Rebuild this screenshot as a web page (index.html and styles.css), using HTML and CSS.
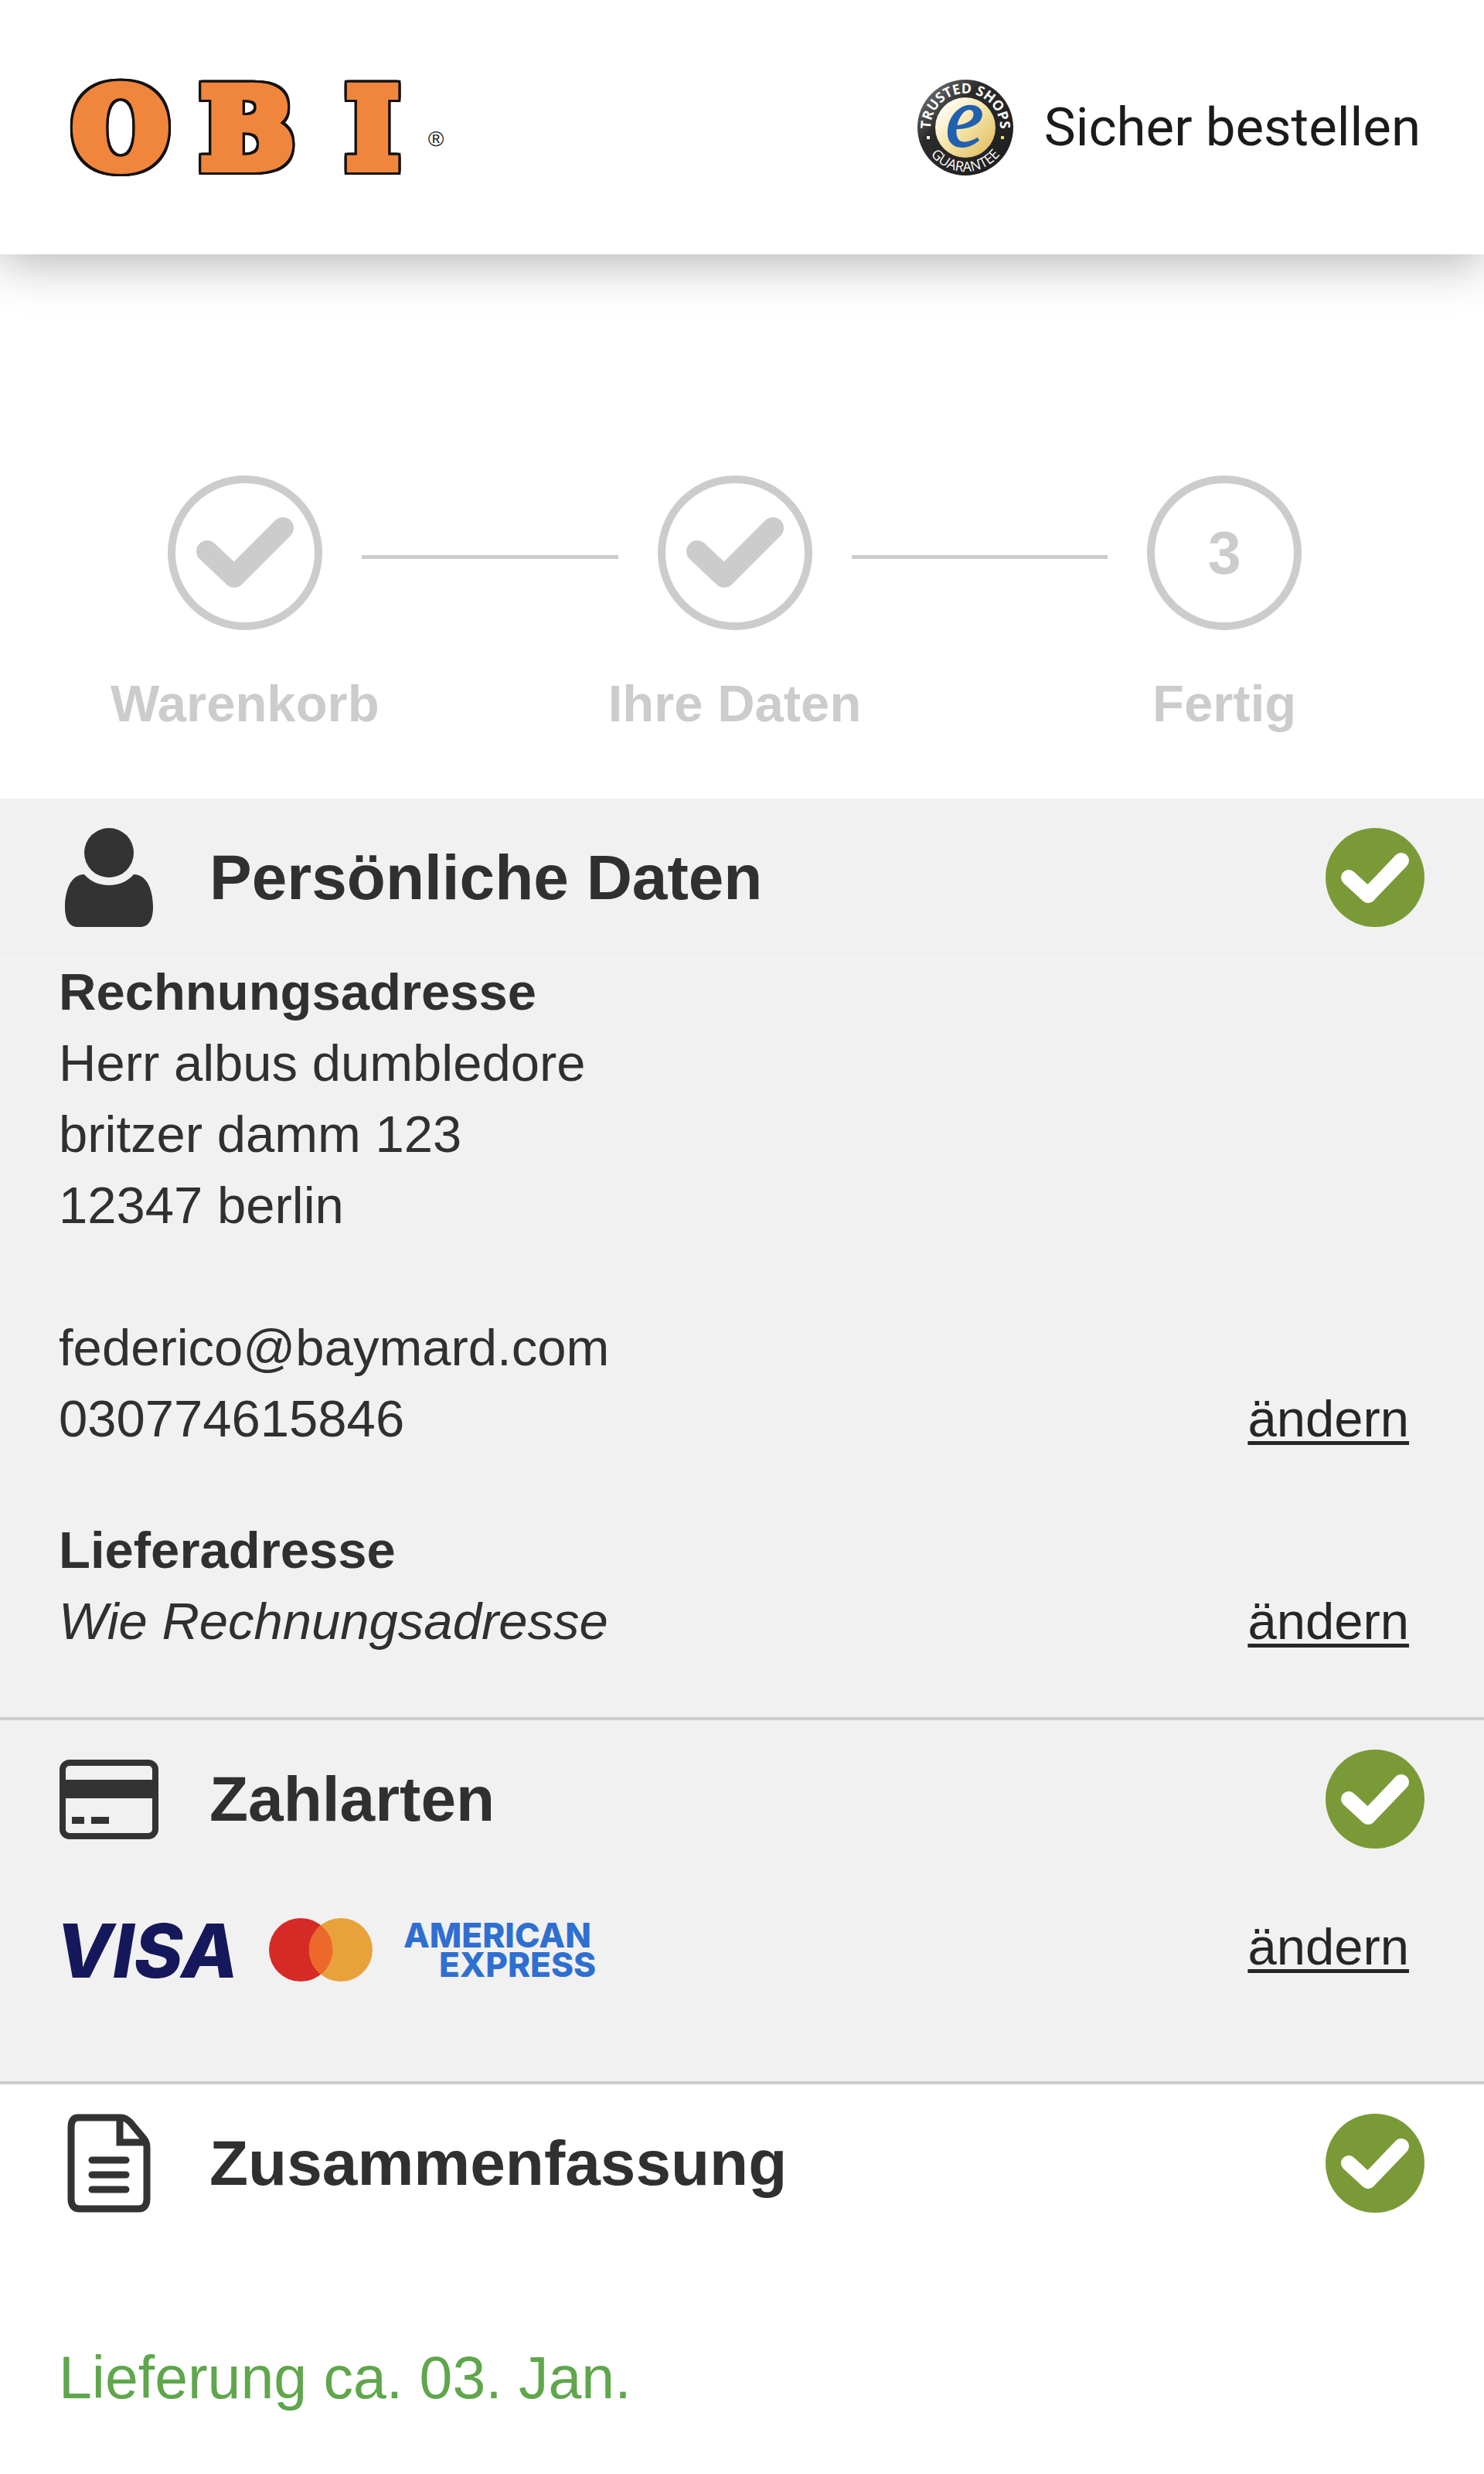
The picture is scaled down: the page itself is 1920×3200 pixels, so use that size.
FILE: index.html
```html
<!DOCTYPE html>
<html lang="de">
<head>
<meta charset="utf-8">
<meta name="viewport" content="width=device-width, initial-scale=1">
<title>OBI – Bestellung prüfen</title>
<link rel="stylesheet" href="styles.css">
</head>
<body>
<svg class="sprite" aria-hidden="true">
  <symbol id="icon-done" viewBox="0 0 128 128">
    <circle cx="64" cy="64" r="64" fill="#7a9a37"/>
    <path d="M30 64 55 87 98 42" fill="none" stroke="#fff" stroke-width="20" stroke-linecap="round" stroke-linejoin="round"/>
  </symbol>
  <symbol id="icon-tick" viewBox="0 0 126 92">
    <path d="M14 44 49 77 112 14" fill="none" stroke="#ccc" stroke-width="28" stroke-linecap="round" stroke-linejoin="round"/>
  </symbol>
</svg>

<header class="header">
  <a class="brand" href="#" aria-label="OBI">
    <svg class="brand-logo" viewBox="0 0 496 120">
      <text class="brand-letters" x="74 238 400" y="111">OBI</text>
      <text class="brand-mark" x="482" y="84">®</text>
    </svg>
  </a>
  <div class="trust">
    <svg class="trust-badge" viewBox="0 0 124 124">
      <defs>
        <linearGradient id="ring" x1="0" y1="0" x2="1" y2="1">
          <stop offset="0" stop-color="#8a8a8a"/><stop offset=".35" stop-color="#2b2b2b"/><stop offset="1" stop-color="#1d1d1d"/>
        </linearGradient>
        <linearGradient id="gold" x1="0" y1="0" x2="1" y2="1">
          <stop offset=".1" stop-color="#fff"/><stop offset=".45" stop-color="#f8e7ae"/><stop offset="1" stop-color="#dcb855"/>
        </linearGradient>
        <path id="arc-top" d="M18 72A45 45 0 1 1 106 72"/>
        <path id="arc-bottom" d="M5 62A57 57 0 0 0 119 62"/>
      </defs>
      <circle cx="62" cy="62" r="62" fill="url(#ring)"/>
      <circle cx="62" cy="62" r="39" fill="url(#gold)"/>
      <text class="trust-top"><textPath href="#arc-top" startOffset="50%">TRUSTED SHOPS</textPath></text>
      <text class="trust-bottom"><textPath href="#arc-bottom" startOffset="50%">GUARANTEE</textPath></text>
      <rect x="12" y="73" width="4" height="4" fill="#fff"/>
      <rect x="108" y="73" width="4" height="4" fill="#f5e04e"/>
      <text class="trust-e" x="61" y="86">e</text>
    </svg>
    <span class="trust-text">Sicher bestellen</span>
  </div>
</header>

<main>
  <ol class="steps">
    <li class="step">
      <div class="step-track"><span class="step-circle"><svg class="step-tick"><use href="#icon-tick"/></svg></span></div>
      <span class="step-label">Warenkorb</span>
    </li>
    <li class="step">
      <div class="step-track"><span class="step-circle"><svg class="step-tick"><use href="#icon-tick"/></svg></span></div>
      <span class="step-label">Ihre Daten</span>
    </li>
    <li class="step">
      <div class="step-track"><span class="step-circle">3</span></div>
      <span class="step-label">Fertig</span>
    </li>
  </ol>

  <section class="panel">
    <div class="panel-head panel-head-ruled">
      <svg class="icon" viewBox="0 0 128 128" fill="#333">
        <circle cx="64" cy="32" r="32"/>
        <path d="M32 60C40 69 51 74 64 74S88 69 96 60C114 60 121 82 121 102C121 118 116 128 104 128H24C12 128 7 118 7 102C7 82 14 60 32 60Z"/>
      </svg>
      <h2 class="panel-title">Persönliche Daten</h2>
      <svg class="icon"><use href="#icon-done"/></svg>
    </div>
    <div class="panel-body">
      <div class="entry">
        <div>
          <h3 class="entry-title">Rechnungsadresse</h3>
          <address class="address">Herr albus dumbledore<br>britzer damm 123<br>12347 berlin<br><br>federico@baymard.com<br>030774615846</address>
        </div>
        <a class="change" href="#">ändern</a>
      </div>
      <div class="entry">
        <div>
          <h3 class="entry-title">Lieferadresse</h3>
          <p class="same"><em>Wie Rechnungsadresse</em></p>
        </div>
        <a class="change" href="#">ändern</a>
      </div>
    </div>
  </section>

  <section class="panel panel-ruled">
    <div class="panel-head">
      <svg class="icon" viewBox="0 0 128 128">
        <rect x="4" y="17" width="120" height="95" rx="9" fill="none" stroke="#333" stroke-width="8"/>
        <path d="M4 39H124V63H4ZM16 87H32V96H16ZM41 87H64V96H41Z" fill="#333"/>
      </svg>
      <h2 class="panel-title">Zahlarten</h2>
      <svg class="icon"><use href="#icon-done"/></svg>
    </div>
    <div class="panel-body panel-body-pay">
      <div class="entry">
        <div class="cards">
          <svg class="visa" viewBox="0 0 232 84"><text x="-4" y="78">VISA</text></svg>
          <svg class="mastercard" viewBox="0 0 134 84">
            <circle cx="41" cy="42" r="41" fill="#d62a27"/>
            <circle cx="93" cy="42" r="41" fill="#e9a23b"/>
            <path d="M67 10A41 41 0 0 1 67 74A41 41 0 0 1 67 10Z" fill="#ec682b"/>
          </svg>
          <svg class="amex" viewBox="0 0 250 84"><text x="0" y="39">AMERICAN</text><text x="249" y="77" text-anchor="end">EXPRESS</text></svg>
        </div>
        <a class="change" href="#">ändern</a>
      </div>
    </div>
  </section>

  <section class="panel panel-ruled panel-plain">
    <div class="panel-head">
      <svg class="icon" viewBox="0 0 128 128" fill="none" stroke="#333" stroke-width="9">
        <path d="M24 5H80C86 5 90 9 94 14L109 32C112 36 113 38 113 43V110Q113 123 102 123H26Q15 123 15 110V18Q15 5 24 5ZM78 5V37H112"/>
        <path d="M42 60H86M42 79H86M42 98H86" stroke-linecap="round"/>
      </svg>
      <h2 class="panel-title">Zusammenfassung</h2>
      <svg class="icon"><use href="#icon-done"/></svg>
    </div>
    <p class="delivery">Lieferung ca. 03. Jan.</p>
  </section>
</main>
</body>
</html>
```
FILE: styles.css
```css
* { box-sizing: border-box; }

body {
  margin: 0;
  background: #fff;
  color: #303030;
  font: 67px/92px "Liberation Sans", Arial, sans-serif;
}

h2, h3, p, ol { margin: 0; padding: 0; }
svg { display: block; flex: none; overflow: visible; }
.sprite { position: absolute; width: 0; height: 0; }

/* Header */
.header {
  display: flex;
  align-items: center;
  justify-content: space-between;
  height: 329px;
  padding: 0 82px;
  background: #fff;
  box-shadow: 0 10px 60px rgba(0, 0, 0, .3);
}
.brand-logo { width: 496px; height: 120px; }
.brand-letters {
  font: bold 140px "DejaVu Serif", serif;
  text-anchor: middle;
  fill: #f0863c;
  stroke: #f0863c;
  stroke-width: 14px;
  filter:
    drop-shadow(3px 0 0 #111) drop-shadow(-3px 0 0 #111)
    drop-shadow(0 3px 0 #111) drop-shadow(0 -3px 0 #111);
}
.brand-mark { font: 28px "Liberation Sans", Arial, sans-serif; fill: #222; text-anchor: middle; }

.trust { display: flex; align-items: center; gap: 40px; }
.trust-badge { width: 124px; height: 124px; }
.trust-badge text { text-anchor: middle; fill: #fff; }
.trust-top { font: bold 18px "Open Sans", sans-serif; }
.trust-bottom { font: 18px "Open Sans", sans-serif; }
.trust-badge .trust-e { font: italic 110px "Liberation Serif", serif; fill: #2160ae; stroke: #2160ae; stroke-width: 2px; }
.trust-text {
  color: #1b1b1b;
  font-family: Roboto, sans-serif;
  font-size: 69px;
  white-space: nowrap;
}

/* Progress */
.steps {
  display: grid;
  grid-template-columns: repeat(3, 1fr);
  padding: 286px 19px 77px 0;
  list-style: none;
  color: #ccc;
  font-weight: bold;
  text-align: center;
}
.step-track {
  display: flex;
  align-items: center;
  gap: 51px;
  margin-bottom: 49px;
}
.step-track::before,
.step-track::after {
  content: "";
  flex: 1;
  height: 5px;
  margin-top: 10px;
  background: #ccc;
}
.step:first-child .step-track::before,
.step:last-child .step-track::after { background: none; }
.step-circle {
  display: flex;
  align-items: center;
  justify-content: center;
  width: 200px;
  height: 200px;
  border: 10px solid #ccc;
  border-radius: 50%;
  font-size: 77px;
}
.step-tick { width: 126px; height: 92px; }
.step-label { display: block; }

/* Panels */
.panel { background: #f1f1f1; }
.panel-ruled { border-top: 4px solid #ccc; }
.panel-plain { background: #fff; }
.panel-head {
  display: flex;
  align-items: center;
  gap: 66px;
  height: 204px;
  padding: 0 77px;
}
.panel-head-ruled { box-shadow: 0 4px 0 #f4f4f4; }
.panel-title { flex: 1; font-size: 82px; line-height: 92px; }
.icon { width: 128px; height: 128px; }

.panel-body {
  display: grid;
  gap: 78px;
  padding: 0 97px 78px 76px;
}
.panel-body-pay { padding-top: 43px; padding-bottom: 128px; }
.entry {
  display: flex;
  align-items: flex-end;
  justify-content: space-between;
}
.entry-title { font-size: 67px; line-height: 92px; }
.address { font-style: normal; }
.change {
  color: #262626;
  text-decoration-thickness: 5px;
  text-underline-offset: 6px;
}

.cards { display: flex; gap: 40px; }
.visa { width: 232px; height: 84px; font: italic 800 96px Inter, sans-serif; fill: #15185a; }
.mastercard { width: 134px; height: 84px; }
.amex { width: 250px; height: 84px; font: 800 44px Inter, sans-serif; fill: #2f6fd0; }

.delivery {
  padding: 129px 76px 79px;
  color: #5fa64c;
  font-size: 77px;
}
```
